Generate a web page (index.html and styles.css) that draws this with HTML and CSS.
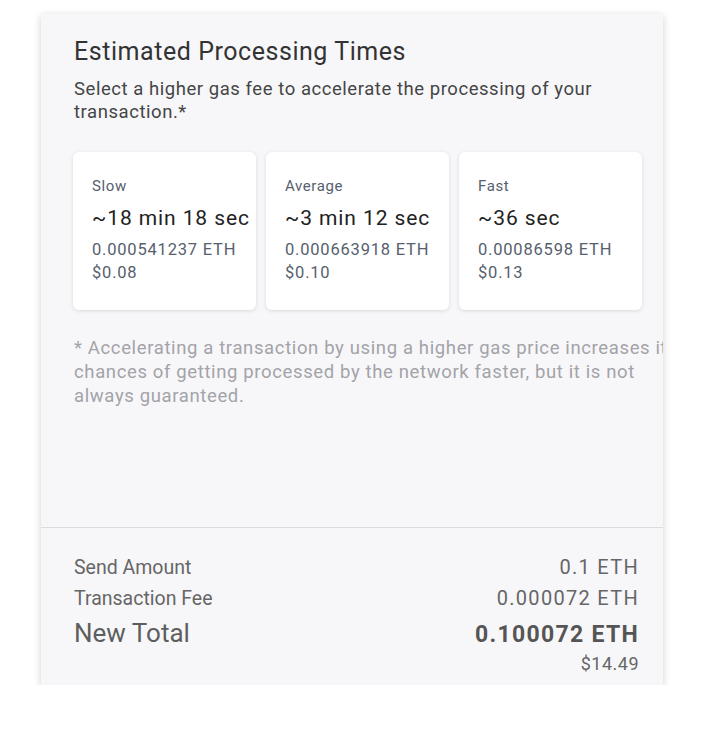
FILE: index.html
```html
<!DOCTYPE html>
<html>
<head>
<meta charset="utf-8">
<link rel="stylesheet" href="styles.css">
</head>
<body>
<div class="panel">
  <div class="top">
    <h1 class="title">Estimated Processing Times</h1>
    <p class="subtitle">Select a higher gas fee to accelerate the processing of your transaction.*</p>
    <div class="cards">
      <div class="card">
        <div class="speed">Slow</div>
        <div class="time">~18 min 18 sec</div>
        <div class="amt">0.000541237 ETH</div>
        <div class="amt">$0.08</div>
      </div>
      <div class="card">
        <div class="speed">Average</div>
        <div class="time">~3 min 12 sec</div>
        <div class="amt">0.000663918 ETH</div>
        <div class="amt">$0.10</div>
      </div>
      <div class="card">
        <div class="speed">Fast</div>
        <div class="time">~36 sec</div>
        <div class="amt">0.00086598 ETH</div>
        <div class="amt">$0.13</div>
      </div>
    </div>
    <p class="note">* Accelerating a transaction by using a higher gas price increases its chances of getting processed by the network faster, but it is not always guaranteed.</p>
  </div>
  <div class="bottom">
    <div class="row r1"><span class="label">Send Amount</span><span class="val">0.1 ETH</span></div>
    <div class="row r2"><span class="label">Transaction Fee</span><span class="val">0.000072 ETH</span></div>
    <div class="row r3"><span class="label big">New Total</span><span class="val total">0.100072 ETH</span></div>
    <div class="row r4"><span></span><span class="usd">$14.49</span></div>
  </div>
</div>
</body>
</html>
```
FILE: styles.css
```css
* { box-sizing: border-box; }
html, body { margin: 0; padding: 0; background: #ffffff; }
body { font-family: Roboto, "Liberation Sans", sans-serif; }
.panel {
  margin: 14px 0 0 41px;
  width: 622px;
  height: 671px;
  background: #f7f7fa;
  box-shadow: 0 2px 8px rgba(0,0,0,0.18);
  overflow: hidden;
  display: flex;
  flex-direction: column;
}
.top {
  height: 514px;
  padding: 24px 0 0 33px;
  border-bottom: 1px solid #dcdce0;
  flex: none;
}
.title {
  margin: 0;
  font-size: 25px;
  letter-spacing: 0.55px;
  line-height: 28px;
  font-weight: 400;
  color: #333;
}
.subtitle {
  margin: 12px 0 0;
  width: 560px;
  font-size: 18.5px;
  letter-spacing: 0.55px;
  line-height: 23px;
  color: #454545;
}
.cards {
  margin-top: 28px;
  display: flex;
  gap: 10px;
  margin-left: -1px;
}
.card {
  width: 183px;
  height: 158px;
  background: #fff;
  border-radius: 6px;
  box-shadow: 0 1px 4px rgba(0,0,0,0.12);
  padding: 25px 0 0 19px;
  white-space: nowrap;
}
.speed { font-size: 15px; letter-spacing: 0.6px; line-height: 18px; color: #56606e; }
.time { margin-top: 10px; font-size: 21px; letter-spacing: 0.9px; line-height: 26px; color: #222; }
.amt { font-size: 16.5px; letter-spacing: 0.8px; line-height: 23px; color: #56606e; }
.time + .amt { margin-top: 7px; }
.note {
  margin: 26px 0 0;
  width: 612px;
  font-size: 18.5px;
  letter-spacing: 0.63px;
  line-height: 24px;
  color: #a3a3a8;
}
.bottom { padding: 24px 24px 0 33px; }
.row { display: flex; justify-content: space-between; align-items: baseline; }
.r1, .r2 { line-height: 30px; }
.r3 { line-height: 38px; }
.r4 { line-height: 20px; }
.label { font-size: 19.5px; color: #666; }
.label.big { font-size: 26px; color: #5e5e5e; }
.val { font-size: 20px; letter-spacing: 1.3px; color: #666; }
.val.total { font-size: 23px; font-weight: 700; letter-spacing: 1.3px; color: #555; }
.usd { font-size: 18px; letter-spacing: 0.5px; color: #666; }
```
